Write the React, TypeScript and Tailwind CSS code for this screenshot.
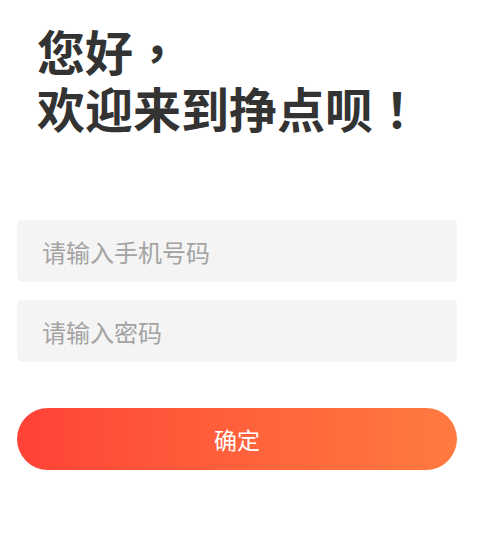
export default function App() {
  return (
    <div
      className="w-[490px] h-[558px] bg-white pl-[17px] pr-[33px]"
      style={{ fontFamily: '"Noto Sans CJK SC", "Noto Sans", sans-serif' }}
    >
      <h1 className="pl-[20px] pt-[22px] text-[48px] leading-[57px] font-semibold text-[#333333]">
        您好
        <span className="inline-block w-[1em] text-center" style={{ fontFamily: '"Noto Sans CJK TC", sans-serif' }}>
          ，
        </span>
        <br />
        欢迎来到挣点呗
        <span className="inline-block w-[1em] text-center" style={{ fontFamily: '"Noto Sans CJK TC", sans-serif' }}>
          ！
        </span>
      </h1>

      <div className="mt-[84px] flex flex-col gap-[18px]">
        <input
          className="h-[62px] w-full rounded-[5px] bg-[#f4f4f4] px-[25px] text-[24px] text-[#333] placeholder:text-[#a3a3a3] outline-none"
          placeholder="请输入手机号码"
        />
        <input
          type="password"
          className="h-[62px] w-full rounded-[5px] bg-[#f4f4f4] px-[25px] text-[24px] text-[#333] placeholder:text-[#a3a3a3] outline-none"
          placeholder="请输入密码"
        />
      </div>

      <button className="mt-[46px] h-[62px] w-full rounded-full bg-gradient-to-r from-[#ff4136] to-[#ff7a40] text-[23px] text-white">
        确定
      </button>
    </div>
  );
}
